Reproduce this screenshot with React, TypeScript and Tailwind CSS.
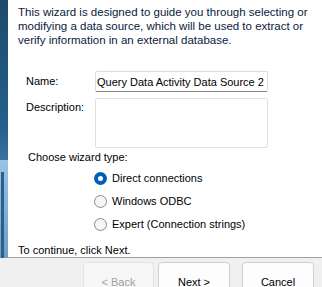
import { useState } from 'react';

const ui = { fontFamily: '"Liberation Sans", Arial, sans-serif' };

function Radio({ checked, label, onSelect }: { checked: boolean; label: string; onSelect: () => void }) {
    return (
        <button type="button" onClick={onSelect} className="flex h-[23px] items-center gap-[5px] text-left">
            {checked ? (
                <span className="flex h-[13px] w-[13px] items-center justify-center rounded-full bg-[#005fb8]">
                    <span className="h-[5px] w-[5px] rounded-full bg-white" />
                </span>
            ) : (
                <span className="h-[13px] w-[13px] rounded-full border border-[#8a8a8a] bg-[#f6f6f6]" />
            )}
            <span className="text-[11px] text-black">{label}</span>
        </button>
    );
}

export default function App() {
    const [type, setType] = useState('direct');
    const [name, setName] = useState('Query Data Activity Data Source 2');

    return (
        <div className="flex h-[287px] w-[322px] flex-col overflow-hidden bg-[#f0f0f0]" style={ui}>
            {/* wizard body */}
            <div className="flex h-[258px] shrink-0 border-b border-[#a0a0a0] bg-white">
                {/* side banner */}
                <div className="relative w-[8px] bg-gradient-to-b from-[#1d4a6c] via-[#24608c] to-[#7fb0d8]">
                    <div className="absolute left-0 top-[160px] h-[98px] w-[8px] bg-gradient-to-b from-[#9cc3e2] to-[#6c9fc8]" />
                    <div className="absolute left-[1px] top-[172px] h-[86px] w-[3px] bg-[#2b5f8c]" />
                </div>

                <div className="flex flex-1 flex-col pl-[10px]">
                    <p className="mt-[5px] text-[11.5px] leading-[14px] text-[#0a1a40]">
                        This wizard is designed to guide you through selecting or modifying a data source, which will be used to extract or
                        verify information in an external database.
                    </p>

                    <div className="mt-[24px] flex h-[21px] items-center">
                        <span className="w-[77px] pl-[8px] text-[11px]">Name:</span>
                        <input
                            value={name}
                            onChange={(e) => setName(e.target.value)}
                            className="h-[21px] w-[173px] rounded-[2px] border border-[#dcdcdc] border-b-[#868686] px-[1px] text-[11px] outline-none"
                        />
                    </div>

                    <div className="mt-[6px] flex items-start">
                        <span className="w-[77px] pl-[8px] pt-[1px] text-[11px]">Description:</span>
                        <textarea className="h-[50px] w-[173px] resize-none rounded-[2px] border border-[#e0e0e0] text-[11px] outline-none" />
                    </div>

                    <div className="mt-[3px] h-[13px] pl-[10px] text-[11px] leading-[13px]">Choose wizard type:</div>
                    <div className="ml-[76px] mt-[3px] flex flex-col">
                        <Radio checked={type === 'direct'} label="Direct connections" onSelect={() => setType('direct')} />
                        <Radio checked={type === 'odbc'} label="Windows ODBC" onSelect={() => setType('odbc')} />
                        <Radio checked={type === 'expert'} label="Expert (Connection strings)" onSelect={() => setType('expert')} />
                    </div>

                    <div className="mt-auto h-[13px] text-[11px] leading-[13px]">To continue, click Next.</div>
                </div>
            </div>

            {/* buttons */}
            <div className="flex shrink-0 pl-[83px] pt-[4px]">
                <button disabled className="h-[40px] w-[71px] rounded-[4px] border border-[#e3e3e3] bg-[#f6f6f6] text-[11px] text-[#a0a0a0]">
                    &lt; Back
                </button>
                <button className="ml-[4px] h-[40px] w-[72px] rounded-[4px] border border-[#d0d0d0] bg-[#fdfdfd] text-[11px] text-black">
                    Next &gt;
                </button>
                <button className="ml-[12px] h-[40px] w-[72px] rounded-[4px] border border-[#d0d0d0] bg-[#fdfdfd] text-[11px] text-black">
                    Cancel
                </button>
            </div>
        </div>
    );
}
